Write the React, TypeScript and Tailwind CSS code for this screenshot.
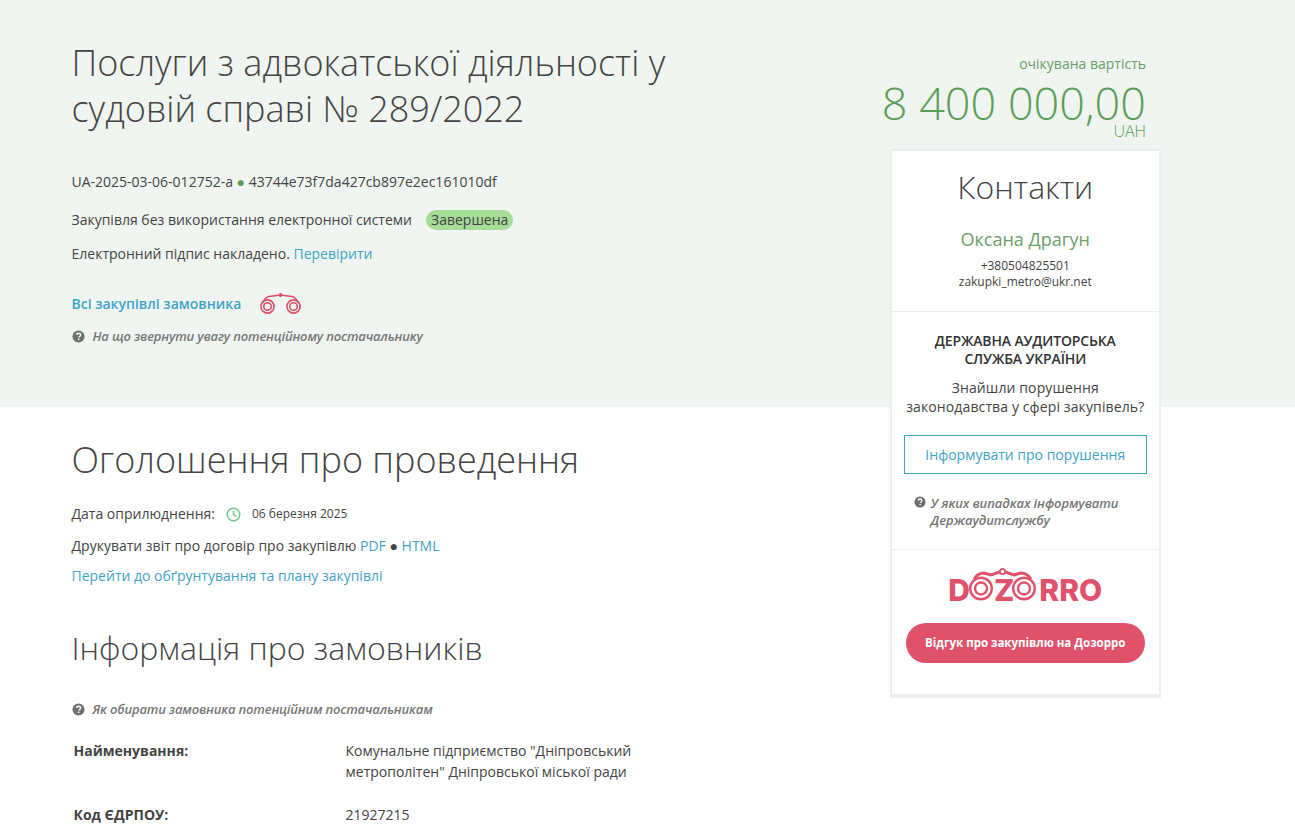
import React from 'react';

const QuestionIcon = ({ className }: { className?: string }) => (
  <svg viewBox="0 0 14 14" className={className}>
    <circle cx="7" cy="7" r="6.5" fill="#6f6f6f" />
    <path d="M4.9 5.4c.1-1.2 1-1.9 2.2-1.9 1.2 0 2.1.7 2.1 1.8 0 .9-.5 1.3-1.1 1.7-.4.3-.6.5-.6 1" fill="none" stroke="#fff" strokeWidth="1.5" />
    <rect x="6.3" y="9.2" width="1.6" height="1.6" fill="#fff" />
  </svg>
);

// small binoculars next to the link
const Binoculars = ({ className }: { className?: string }) => (
  <svg viewBox="0 0 42 22" fill="none" stroke="#d9506a" strokeWidth="1.6" className={className}>
    <circle cx="7.5" cy="13.5" r="6.6" />
    <circle cx="7.5" cy="13.5" r="3.8" />
    <circle cx="33.5" cy="13.5" r="6.6" />
    <circle cx="33.5" cy="13.5" r="3.8" />
    <path d="M2 10 L6 5 Q8 3 11 3.2 L20.5 2 L30 3.2 Q33 3 35 5 L39 10" />
    <circle cx="20.5" cy="2" r="1.9" fill="#d9506a" stroke="none" />
  </svg>
);

// the two O's of the logo joined by a bridge
const LogoRings = () => (
  <svg viewBox="0 0 72 34" fill="none" stroke="#e0526c" className="absolute left-[-1px] top-[-7px] w-[72px] h-[34px]">
    <circle cx="12" cy="20.5" r="10.8" strokeWidth="2.4" />
    <circle cx="12" cy="20.5" r="6" strokeWidth="2.4" />
    <circle cx="55" cy="20.5" r="10.8" strokeWidth="2.4" />
    <circle cx="55" cy="20.5" r="6" strokeWidth="2.4" />
    <path d="M5 11 Q9 5 15 5 L22 7 L33.5 3 L45 7 L52 5 Q58 5 62 11" strokeWidth="3" />
    <circle cx="33.5" cy="3.5" r="2.6" fill="#fff" strokeWidth="1.8" />
  </svg>
);

const Dozorro = () => (
  <div className="flex justify-center h-[36px] items-end font-['Inter',sans-serif] font-extrabold text-[30px] leading-[30px] text-[#e0526c]">
    <span>D</span>
    <span className="relative flex">
      <span className="w-[24px]" />
      <span>Z</span>
      <span className="w-[25px]" />
      <LogoRings />
    </span>
    <span>RRO</span>
  </div>
);

export default function App() {
  return (
    <div className="relative h-[836px] overflow-hidden bg-white font-['Open_Sans',sans-serif] text-[14px] text-[#444]">
      {/* green band behind the header */}
      <div className="absolute inset-x-0 top-0 h-[407px] bg-[#f0f5f1]" />

      <div className="relative flex pl-[71.5px]">
        {/* Main column */}
        <div className="w-[818px] shrink-0">
          <h1 className="w-[640px] pt-[40px] text-[36px] leading-[46px] font-light">
            Послуги з адвокатської діяльності у судовій справі № 289/2022
          </h1>

          <p className="mt-[40px] leading-[20px]">
            UA-2025-03-06-012752-a <span className="text-[#5a9e57]">●</span> 43744e73f7da427cb897e2ec161010df
          </p>
          <p className="mt-[18px] flex items-center leading-[20px]">
            Закупівля без використання електронної системи
            <span className="ml-[14px] rounded-full bg-[#a5dc97] px-[5px] leading-[20px]">Завершена</span>
          </p>
          <p className="mt-[14px] leading-[20px]">
            Електронний підпис накладено. <a className="text-[#3fa3c9]">Перевірити</a>
          </p>
          <div className="mt-[29px] flex items-center">
            <a className="font-semibold text-[#3fa3c9] leading-[20px]">Всі закупівлі замовника</a>
            <Binoculars className="ml-[19px] w-[42px] h-[22px]" />
          </div>
          <div className="mt-[11px] flex items-center gap-[8px] text-[13px] italic font-semibold tracking-[-0.17px] text-[#777] leading-[20px]">
            <QuestionIcon className="w-[13px] h-[13px]" />
            На що звернути увагу потенційному постачальнику
          </div>

          <h2 className="mt-[91px] text-[36px] leading-[46px] font-light">Оголошення про проведення</h2>
          <div className="mt-[21px] flex items-center leading-[20px]">
            Дата оприлюднення:
            <svg viewBox="0 0 16 16" fill="none" stroke="#6fcb84" strokeWidth="1.6" className="ml-[11px] w-[15px] h-[15px]">
              <circle cx="8" cy="8" r="6.7" />
              <path d="M8 4v4.4l3 1.6" />
            </svg>
            <span className="ml-[11px] text-[12px]">06 березня 2025</span>
          </div>
          <p className="mt-[12px] leading-[20px]">
            Друкувати звіт про договір про закупівлю <a className="text-[#3fa3c9]">PDF</a> ● <a className="text-[#3fa3c9]">HTML</a>
          </p>
          <p className="mt-[10px] leading-[20px]">
            <a className="text-[#3fa3c9]">Перейти до обґрунтування та плану закупівлі</a>
          </p>

          <h2 className="mt-[41px] text-[32px] leading-[42px] font-light">Інформація про замовників</h2>
          <div className="mt-[30px] flex items-center gap-[8px] text-[13px] italic font-semibold tracking-[-0.17px] text-[#777] leading-[20px]">
            <QuestionIcon className="w-[13px] h-[13px]" />
            Як обирати замовника потенційним постачальникам
          </div>
          <div className="mt-[21px] grid grid-cols-[272px_300px] gap-y-[22px] pl-[2px] leading-[21px]">
            <div className="font-bold">Найменування:</div>
            <div>Комунальне підприємство "Дніпровський метрополітен" Дніпровської міської ради</div>
            <div className="font-bold">Код ЄДРПОУ:</div>
            <div>21927215</div>
          </div>
        </div>

        {/* Sidebar */}
        <aside className="w-[271.5px] shrink-0">
          <div className="flex flex-col items-end pt-[54px] pr-[15px] pb-[10px] text-[#5a9e57]">
            <div className="leading-[20px] text-[#6a9f68]">очікувана вартість</div>
            <div className="mt-[9px] text-[45px] leading-[40px] font-light whitespace-nowrap">8 400 000,00</div>
            <div className="text-[16px] leading-[16px] font-light">UAH</div>
          </div>
          <div className="border-2 border-b-[4px] border-[#eeeeee] bg-white text-center">
            <div className="pt-[15px] pb-[21px] border-b border-[#eeeeee]">
              <h3 className="text-[32px] leading-[42px] font-light">Контакти</h3>
              <div className="mt-[19px] text-[18px] leading-[24px] text-[#6a9f68]">Оксана Драгун</div>
              <div className="mt-[7px] text-[12px] leading-[16px]">+380504825501</div>
              <div className="text-[12px] leading-[16px]">zakupki_metro@ukr.net</div>
            </div>
            <div className="px-[12px] pt-[20px] pb-[20px] border-b border-[#eeeeee]">
              <div className="font-semibold tracking-[-0.15px] leading-[18px] text-[#333]">ДЕРЖАВНА АУДИТОРСЬКА<br />СЛУЖБА УКРАЇНИ</div>
              <div className="mt-[10px] tracking-[0.12px] leading-[19px]">Знайшли порушення<br />законодавства у сфері закупівель?</div>
              <button className="mt-[19px] w-full h-[39px] border border-[#3fa3b9] text-[#3fa3c9]">Інформувати про порушення</button>
              <div className="mt-[21px] flex items-start gap-[5px] pl-[10px] text-left text-[13px] italic font-semibold tracking-[-0.1px] text-[#777] leading-[17px]">
                <QuestionIcon className="mt-[1px] w-[12px] h-[12px] shrink-0" />
                <span>У яких випадках інформувати Держаудитслужбу</span>
              </div>
            </div>
            <div className="px-[14px] pt-[19px] pb-[31px]">
              <Dozorro />
              <button className="mt-[18px] w-full h-[40px] rounded-full bg-[#e0526c] text-[11.5px] font-bold text-white">Відгук про закупівлю на Дозорро</button>
            </div>
          </div>
        </aside>
      </div>
    </div>
  );
}
